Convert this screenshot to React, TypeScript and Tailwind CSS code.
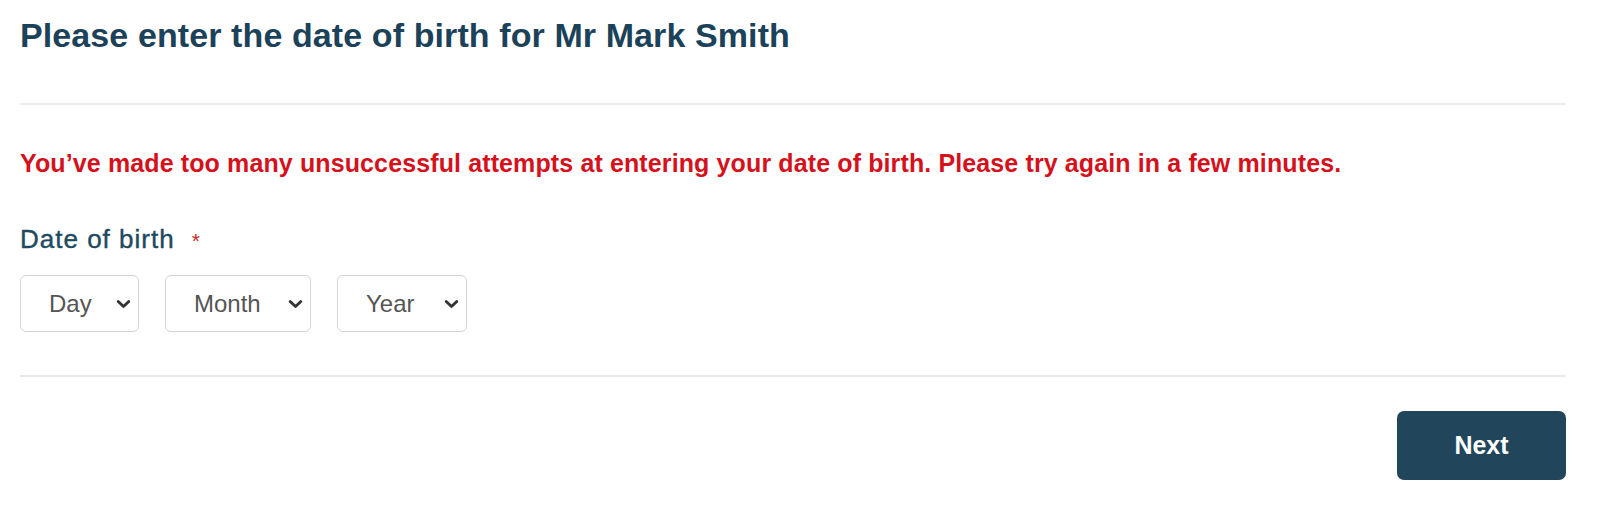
import React from "react";

function Chevron() {
  return (
    <svg width="15" height="10" viewBox="0 0 15 10" className="pointer-events-none absolute right-[7px] top-1/2 -translate-y-1/2">
      <path d="M2.2 2.4 L7.5 7.6 L12.8 2.4" fill="none" stroke="#333" strokeWidth="2.8" strokeLinecap="round" strokeLinejoin="round" />
    </svg>
  );
}

function FakeSelect({ label, width }: { label: string; width: string }) {
  return (
    <div className={`relative h-[57px] ${width} rounded-[6px] border border-[#d3d3d3] bg-white`}>
      <select
        className="h-full w-full appearance-none bg-transparent pl-[28px] text-[24px] text-[#555] outline-none"
        style={{ fontFamily: '"Liberation Sans", Arial, sans-serif' }}
        defaultValue=""
      >
        <option value="">{label}</option>
      </select>
      <Chevron />
    </div>
  );
}

export default function App() {
  return (
    <div className="min-h-[506px] bg-white pl-[20px] pr-[34px] pt-[15px]" style={{ fontFamily: '"Liberation Sans", Arial, sans-serif' }}>
      <h1 className="text-[34px] font-bold leading-[40px] tracking-[0.1px] text-[#1b4259]">Please enter the date of birth for Mr Mark Smith</h1>
      <div className="mt-[48px] h-[2px] bg-[#ededed]" />
      <p className="mt-[42px] text-[25px] font-bold leading-[32px] tracking-[0.12px] text-[#d5111c]">
        You’ve made too many unsuccessful attempts at entering your date of birth. Please try again in a few minutes.
      </p>
      <div className="mt-[44px] flex items-baseline leading-[32px]">
        <span className="text-[26px] tracking-[1px] text-[#1d4a5f] [-webkit-text-stroke:0.4px_#1d4a5f]">Date of birth</span>
        <span className="ml-[17px] text-[21px] text-[#c42b23]">*</span>
      </div>
      <div className="mt-[18px] flex gap-[26px]">
        <FakeSelect label="Day" width="w-[119px]" />
        <FakeSelect label="Month" width="w-[146px]" />
        <FakeSelect label="Year" width="w-[130px]" />
      </div>
      <div className="mt-[43px] h-[2px] bg-[#e8e8e8]" />
      <div className="mt-[34px] flex justify-end">
        <button className="h-[69px] w-[169px] rounded-[7px] bg-[#21465b] text-[25px] font-bold text-white">Next</button>
      </div>
    </div>
  );
}
